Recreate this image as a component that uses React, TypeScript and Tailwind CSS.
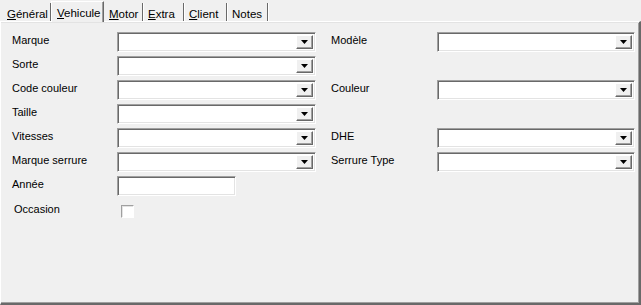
import React from 'react'

const font = { fontFamily: '"Liberation Sans", Arial, sans-serif' }

const Tab = ({ label, accel, active, w }: { label: string; accel?: number; active?: boolean; w: string }) => {
  const text =
    accel === undefined ? (
      label
    ) : (
      <>
        {label.slice(0, accel)}
        <span className="underline underline-offset-[1px]">{label[accel]}</span>
        {label.slice(accel + 1)}
      </>
    )
  if (active) {
    return (
      <div className={`${w} relative z-10 -mb-px h-[21px] pl-[5px] pt-[3px] bg-[#f0f0f0] border-t border-l border-white border-r border-r-[#696969] shadow-[inset_-1px_0_0_#a0a0a0] text-[11.5px] text-black`}>
        {text}
      </div>
    )
  }
  return (
    <div className={`${w} h-[18px] pl-[5px] pt-[3px] border-r border-r-[#696969] shadow-[1px_0_0_#ffffff] text-[11.5px] text-black`}>
      {text}
    </div>
  )
}

const Combo = ({ w }: { w: string }) => (
  <div
    className={`${w} h-5 flex bg-white border border-t-[#a0a0a0] border-l-[#a0a0a0] border-b-white border-r-white shadow-[inset_1px_1px_0_#696969,inset_-1px_-1px_0_#e3e3e3] p-[2px]`}
  >
    <div className="flex-1" />
    <div className="w-[17px] h-full flex items-center justify-center bg-[#f0f0f0] border border-t-white border-l-white border-b-[#696969] border-r-[#696969] shadow-[inset_-1px_-1px_0_#a0a0a0]">
      <svg width="7" height="4" viewBox="0 0 7 4">
        <path d="M0 0H7L3.5 4Z" fill="#000" />
      </svg>
    </div>
  </div>
)

const Label = ({ children, w }: { children: React.ReactNode; w: string }) => (
  <div className={`${w} text-[11px] leading-[13px] text-black -mt-[3px]`}>{children}</div>
)

const rows: [string, string | null][] = [
  ['Marque', 'Modèle'],
  ['Sorte', null],
  ['Code couleur', 'Couleur'],
  ['Taille', null],
  ['Vitesses', 'DHE'],
  ['Marque serrure', 'Serrure Type'],
]

export default function App() {
  return (
    <div className="w-[641px] h-[305px] bg-[#f0f0f0] flex flex-col overflow-hidden" style={font}>
      {/* Tabs */}
      <div className="flex items-end h-[21px] pl-[2px]">
        <Tab w="w-[49px]" label="Général" accel={0} />
        <Tab w="w-[53px]" label="Vehicule" accel={0} active />
        <Tab w="w-[39px]" label="Motor" accel={0} />
        <Tab w="w-[41px]" label="Extra" accel={0} />
        <Tab w="w-[43px]" label="Client" accel={0} />
        <Tab w="w-[41px]" label="Notes" />
      </div>

      {/* Panel */}
      <div className="flex-1 flex flex-col border-t border-l border-white border-r-2 border-r-[#696969] border-b-2 border-b-[#696969] shadow-[inset_0_1px_0_#e3e3e3,inset_-1px_-1px_0_#a0a0a0] pl-[11px] pt-[10px]">
        <div className="flex flex-col gap-1">
          {rows.map(([l, r]) => (
            <div key={l} className="flex items-center h-5">
              <Label w="w-[105px]">{l}</Label>
              <Combo w="w-[199px]" />
              <div className="w-[15px]" />
              {r ? (
                <>
                  <Label w="w-[106px]">{r}</Label>
                  <Combo w="w-[198px]" />
                </>
              ) : null}
            </div>
          ))}
          <div className="flex items-center h-5">
            <Label w="w-[105px]">Année</Label>
            <div className="w-[119px] h-5 bg-white border border-t-[#a0a0a0] border-l-[#a0a0a0] border-b-white border-r-white shadow-[inset_1px_1px_0_#696969,inset_-1px_-1px_0_#e3e3e3]" />
          </div>
          <div className="flex items-center h-5 mt-[1px]">
            <div className="w-[109px] pl-[2px] text-[11px] text-black -mt-[3px]">Occasion</div>
            <div className="w-[13px] h-[13px] bg-white border border-t-[#a0a0a0] border-l-[#a0a0a0] border-b-white border-r-white shadow-[inset_1px_1px_0_#e3e3e3]" />
          </div>
        </div>
      </div>
    </div>
  )
}
